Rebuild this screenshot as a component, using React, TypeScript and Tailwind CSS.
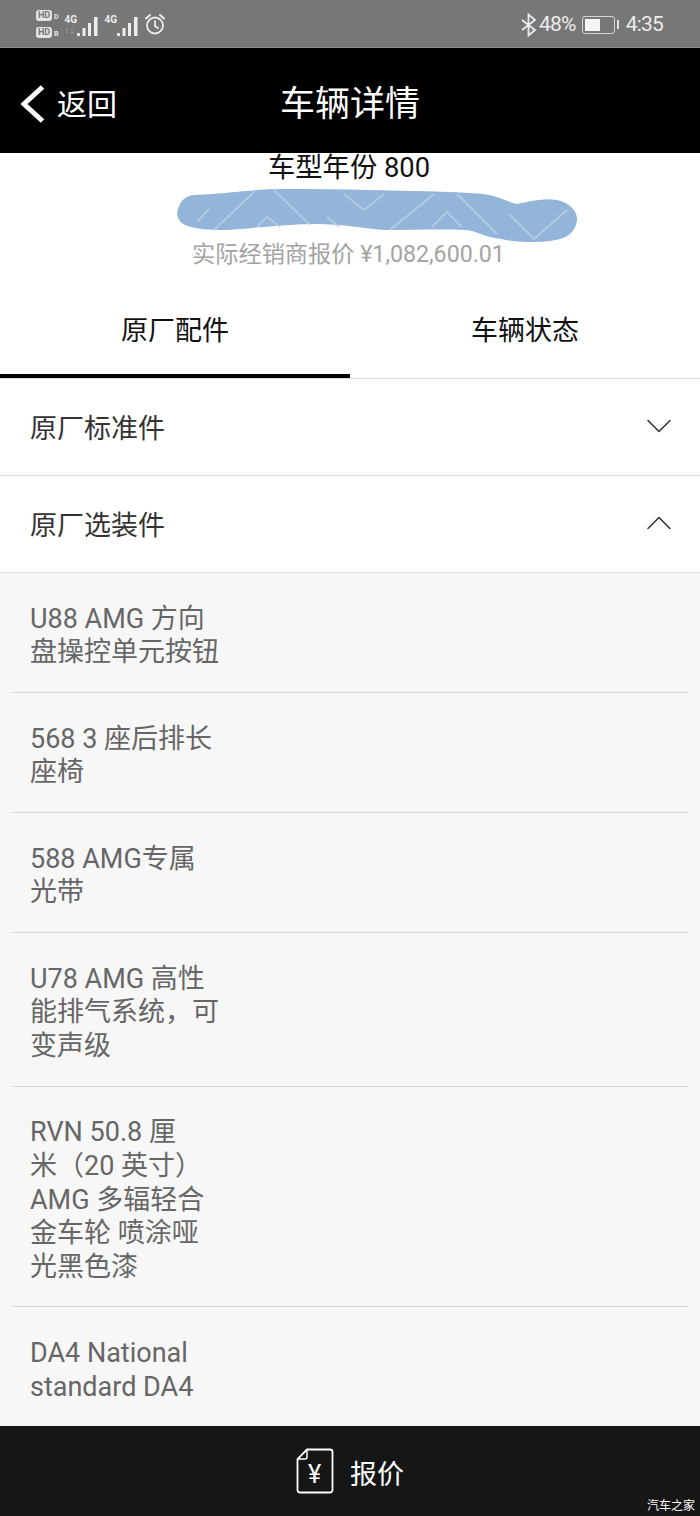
import { ChevronDown, ChevronUp } from "lucide-react";

const fontStack = "font-['Roboto','Noto_Sans_CJK_SC',sans-serif]";

const options = [
  ["U88 AMG 方向", "盘操控单元按钮"],
  ["568 3 座后排长", "座椅"],
  ["588 AMG专属", "光带"],
  ["U78 AMG 高性", "能排气系统，可", "变声级"],
  ["RVN 50.8 厘", "米（20 英寸）", "AMG 多辐轻合", "金车轮 喷涂哑", "光黑色漆"],
  ["DA4 National", "standard DA4"],
];

function Signal() {
  return (
    <svg width="21" height="20" viewBox="0 0 21 20" fill="#ececec">
      <rect x="0" y="17" width="3" height="3" />
      <rect x="5.500" y="12" width="3" height="8" />
      <rect x="11" y="7" width="3" height="13" />
      <rect x="17" y="1" width="3.500" height="19" />
    </svg>
  );
}

function HdBadge({ label }: { label: string }) {
  return (
    <div className="flex items-end gap-[2px]">
      <span className="flex h-[11px] w-[16px] items-center justify-center rounded-[3px] bg-[#e4e4e4] text-[9px] leading-none font-bold text-[#777777]">
        HD
      </span>
      <span className="text-[7px] leading-none font-bold text-[#e4e4e4]">{label}</span>
    </div>
  );
}

function StatusBar() {
  return (
    <div className="flex h-[48px] shrink-0 items-center justify-between border-b border-[#8c8c8c] bg-[#777777] pr-[37px] pl-[36px] text-[#ececec]">
      <div className="flex items-center">
        <div className="flex flex-col gap-[6px]">
          <HdBadge label="D" />
          <HdBadge label="B" />
        </div>
        <div className="relative ml-[6px] flex h-[24px] w-[33px] items-end justify-end">
          <span className="absolute top-[3px] left-0 text-[10px] leading-none font-bold">4G</span>
          <span className="absolute top-[16px] left-0 text-[7px] leading-none text-[#a8a8a8]">1↓</span>
          <Signal />
        </div>
        <div className="relative ml-[7px] flex h-[24px] w-[33px] items-end justify-end">
          <span className="absolute top-[3px] left-0 text-[10px] leading-none font-bold">4G</span>
          <Signal />
        </div>
        <svg className="ml-[6px]" width="22" height="24" viewBox="0 0 22 24" fill="none" stroke="#ececec" strokeWidth="1.800">
          <circle cx="11" cy="13.500" r="8" />
          <path d="M11 8.500v5.500l3.500 2.500" />
          <path d="M2 6.500 6 3M20 6.500 16 3" strokeLinecap="round" strokeWidth="2" />
        </svg>
      </div>
      <div className="flex items-center pt-[2px] text-[21px] leading-none tracking-[-0.8px]">
        <svg width="16" height="24" viewBox="0 0 16 24" fill="none" stroke="#ececec" strokeWidth="1.800">
          <path d="M1 7 14 17 7.500 22.500V1.500L14 7 1 17" />
        </svg>
        <span className="ml-[2px]">48%</span>
        <div className="ml-[6px] flex h-[18px] w-[33px] items-center rounded-[3px] border border-[#d4d4d4] p-[2px]">
          <div className="h-full w-[15px] bg-[#f4f4f4]" />
        </div>
        <div className="ml-[2px] h-[9px] w-[2px] bg-[#e0e0e0]" />
        <span className="ml-[7px]">4:35</span>
      </div>
    </div>
  );
}

function Header() {
  return (
    <div className="relative flex h-[105px] shrink-0 items-center justify-center bg-black pt-[8px] text-white">
      <div className="absolute top-[35px] left-[20px] flex items-center">
        <svg className="mb-[2px]" width="26" height="42" viewBox="0 0 26 42" fill="none" stroke="white" strokeWidth="5">
          <path d="M22.500 4 4 21l18.500 17" />
        </svg>
        <span className="ml-[11px] text-[30px] leading-none">返回</span>
      </div>
      <h1 className="text-[35px] leading-none font-normal">车辆详情</h1>
    </div>
  );
}

function Scribble() {
  return (
    <svg className="mt-[3px] ml-[53px] shrink-0" width="400" height="56" viewBox="0 0 400 56">
      <path
        d="M0 27C2 14 8 9 17 8c30-1 60-6 90-6 28 0 55 0 83 1 40 1 80 1 117 4 14 2 24 8 33 10 14-3 28-6 40-4 13 3 20 11 20 19 0 10-8 18-17 20-11 3-24 3-33 3-14 0-26-3-37-5-8-2-15-6-23-7-28-1-55 0-83 0-22-2-45-6-67-6-30 0-60 4-90 6C8 43 2 37 0 27Z"
        fill="#93b5da"
      />
      <g fill="none" stroke="#c3d1ea" strokeWidth="2" opacity="0.700">
        <path d="M37 43 77 5M97 3l36 35M167 7l20 16 20-16M213 43 257 7M280 7l40 40M332 27l25 25 33-29" />
        <path d="M80 40l10-10 13 10M255 40l15-15 15 15M20 35l12-13M150 30l12 10" />
      </g>
    </svg>
  );
}

function OptionRow({ title, open }: { title: string; open: boolean }) {
  const Icon = open ? ChevronUp : ChevronDown;
  return (
    <div className="flex h-[97px] shrink-0 items-center justify-between border-b border-[#dddddd] pr-[19px] pl-[30px]">
      <span className="mt-[4px] text-[27px] leading-none text-[#333333]">{title}</span>
      <Icon className="mb-[2px] h-[44px] w-[44px] text-[#333333]" strokeWidth={0.85} />
    </div>
  );
}

export default function App() {
  return (
    <div className={`flex h-[1516px] w-[700px] flex-col overflow-hidden bg-white ${fontStack}`}>
      <StatusBar />
      <Header />

      {/* vehicle summary */}
      <div className="flex h-[136px] shrink-0 flex-col items-center">
        <p className="-mt-[1px] mr-[2px] h-[32px] text-[27.300px] leading-[32px] text-[#111111]">车型年份 800</p>
        <Scribble />
        <p className="mt-[-3px] mr-[3px] text-[23.200px] leading-[28px] text-[#a3a3a3]">实际经销商报价 ¥1,082,600.01</p>
      </div>

      {/* tabs */}
      <div className="flex h-[90px] shrink-0 border-b border-[#dddddd] text-[27px] text-[#111111]">
        <div className="flex flex-1 items-center justify-center border-b-[4px] border-black leading-none">
          原厂配件
        </div>
        <div className="flex flex-1 items-center justify-center pb-[4px] leading-none">车辆状态</div>
      </div>

      <OptionRow title="原厂标准件" open={false} />
      <OptionRow title="原厂选装件" open />

      <div className="min-h-0 flex-1 bg-[#f7f7f7] px-[12px]">
        {options.map((lines, i) => (
          <div
            key={i}
            className="border-b border-[#d9d9d9] px-[18px] pt-[29.800px] pb-[22px] text-[27px] leading-[33.600px] text-[#666666] last:border-b-0"
          >
            {lines.map((line) => (
              <div key={line}>{line}</div>
            ))}
          </div>
        ))}
      </div>

      {/* quote bar */}
      <div className="relative flex h-[90px] shrink-0 items-center justify-center bg-[#161616] text-white">
        <svg className="mr-[16px]" width="38" height="46" viewBox="0 0 38 46" fill="none" stroke="white" strokeWidth="1.800">
          <path d="M11 1.500h23a2.500 2.500 0 0 1 2.500 2.500v38a2.500 2.500 0 0 1-2.500 2.500H4A2.500 2.500 0 0 1 1.500 42V11Z" />
          <path d="M11 1.500V9a2 2 0 0 1-2 2H1.500" strokeWidth="1.400" />
        </svg>
        <span className="absolute top-[36px] left-[308px] text-[25px] leading-none">¥</span>
        <span className="mt-[8px] text-[27px] leading-none">报价</span>
        <span className="absolute right-[5px] bottom-[4px] text-[12px] leading-none text-white">汽车之家</span>
      </div>
    </div>
  );
}
